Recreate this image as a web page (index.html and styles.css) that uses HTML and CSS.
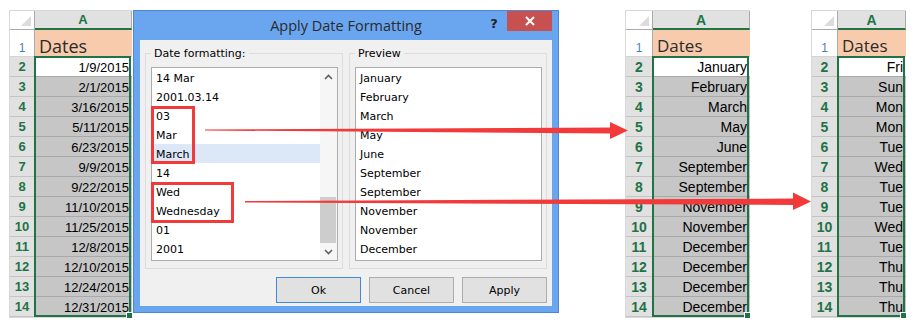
FILE: index.html
```html
<!DOCTYPE html>
<html lang="en">
<head>
    <meta charset="UTF-8">
    <title>Apply Date Formatting</title>
    <link rel="stylesheet" href="styles.css">
</head>
<body>
<div class="scene">

    <!-- source sheet -->
    <div class="sheet sheet-left">
        <div class="corner"></div>
        <div class="colhead">A</div>
        <div class="rowhead first">1</div>
        <div class="cell title">Dates</div>
        <div class="rowheads">
            <div>2</div><div>3</div><div>4</div><div>5</div><div>6</div><div>7</div><div>8</div>
            <div>9</div><div>10</div><div>11</div><div>12</div><div>13</div><div>14</div>
        </div>
        <div class="selection">
            <div class="cell active">1/9/2015</div>
            <div class="cell">2/1/2015</div>
            <div class="cell">3/16/2015</div>
            <div class="cell">5/11/2015</div>
            <div class="cell">6/23/2015</div>
            <div class="cell">9/9/2015</div>
            <div class="cell">9/22/2015</div>
            <div class="cell">11/10/2015</div>
            <div class="cell">11/25/2015</div>
            <div class="cell">12/8/2015</div>
            <div class="cell">12/10/2015</div>
            <div class="cell">12/24/2015</div>
            <div class="cell">12/31/2015</div>
        </div>
    </div>

    <!-- dialog -->
    <div class="dialog">
        <div class="titlebar">
            <span class="title">Apply Date Formatting</span>
            <span class="help">?</span>
            <span class="close">
                <svg width="12" height="10" viewBox="0 0 12 10">
                    <path d="M2 1 L10 9 M10 1 L2 9" stroke="#fff" stroke-width="2" fill="none"/>
                </svg>
            </span>
        </div>
        <div class="dialog-body">
            <div class="groups">
                <div class="group">
                    <span class="group-label">Date formatting:</span>
                    <div class="listbox">
                        <ul class="items">
                            <li>14 Mar</li>
                            <li>2001.03.14</li>
                            <li>03</li>
                            <li>Mar</li>
                            <li class="selected">March</li>
                            <li>14</li>
                            <li>Wed</li>
                            <li>Wednesday</li>
                            <li>01</li>
                            <li>2001</li>
                        </ul>
                        <div class="scrollbar">
                            <div class="sb-btn">
                                <svg width="9" height="6" viewBox="0 0 9 6"><path d="M1 5 L4.5 1.5 L8 5" stroke="#606060" stroke-width="1.6" fill="none"/></svg>
                            </div>
                            <div class="sb-track"><div class="sb-thumb"></div></div>
                            <div class="sb-btn">
                                <svg width="9" height="6" viewBox="0 0 9 6"><path d="M1 1 L4.5 4.5 L8 1" stroke="#606060" stroke-width="1.6" fill="none"/></svg>
                            </div>
                        </div>
                    </div>
                </div>
                <div class="group">
                    <span class="group-label">Preview</span>
                    <div class="listbox">
                        <ul class="items">
                            <li>January</li>
                            <li>February</li>
                            <li>March</li>
                            <li>May</li>
                            <li>June</li>
                            <li>September</li>
                            <li>September</li>
                            <li>November</li>
                            <li>November</li>
                            <li>December</li>
                        </ul>
                    </div>
                </div>
            </div>
            <div class="buttons">
                <button class="ok">Ok</button>
                <button>Cancel</button>
                <button>Apply</button>
            </div>
        </div>
    </div>

    <!-- month result -->
    <div class="sheet sheet-mid">
        <div class="corner"></div>
        <div class="colhead">A</div>
        <div class="rowhead first">1</div>
        <div class="cell title">Dates</div>
        <div class="rowheads">
            <div>2</div><div>3</div><div>4</div><div>5</div><div>6</div><div>7</div><div>8</div>
            <div>9</div><div>10</div><div>11</div><div>12</div><div>13</div><div>14</div>
        </div>
        <div class="selection">
            <div class="cell active">January</div>
            <div class="cell">February</div>
            <div class="cell">March</div>
            <div class="cell">May</div>
            <div class="cell">June</div>
            <div class="cell">September</div>
            <div class="cell">September</div>
            <div class="cell">November</div>
            <div class="cell">November</div>
            <div class="cell">December</div>
            <div class="cell">December</div>
            <div class="cell">December</div>
            <div class="cell">December</div>
        </div>
    </div>

    <!-- weekday result -->
    <div class="sheet sheet-right">
        <div class="corner"></div>
        <div class="colhead">A</div>
        <div class="rowhead first">1</div>
        <div class="cell title">Dates</div>
        <div class="rowheads">
            <div>2</div><div>3</div><div>4</div><div>5</div><div>6</div><div>7</div><div>8</div>
            <div>9</div><div>10</div><div>11</div><div>12</div><div>13</div><div>14</div>
        </div>
        <div class="selection">
            <div class="cell active">Fri</div>
            <div class="cell">Sun</div>
            <div class="cell">Mon</div>
            <div class="cell">Mon</div>
            <div class="cell">Tue</div>
            <div class="cell">Wed</div>
            <div class="cell">Tue</div>
            <div class="cell">Tue</div>
            <div class="cell">Wed</div>
            <div class="cell">Tue</div>
            <div class="cell">Thu</div>
            <div class="cell">Thu</div>
            <div class="cell">Thu</div>
        </div>
    </div>

    <!-- annotations drawn over everything -->
    <svg class="marks" width="918" height="328" viewBox="0 0 918 328">
        <rect x="152.5" y="107.5" width="41" height="55" fill="none" stroke="#f23a3a" stroke-width="3"/>
        <rect x="152.5" y="183.5" width="80" height="38" fill="none" stroke="#f23a3a" stroke-width="3"/>
        <polygon points="205,129.5 612,127.5 612,133.5 205,130.5" fill="#f23a3a"/>
        <polygon points="610,122 628,130.5 610,139" fill="#f23a3a"/>
        <polygon points="245,201 795,198.5 795,205 245,202.5" fill="#f23a3a"/>
        <polygon points="793,192.5 811,201.5 793,210" fill="#f23a3a"/>
    </svg>
</div>
</body>
</html>
```

FILE: styles.css
```css
body {
    margin: 0;
    background: #fff;
}
.scene {
    position: relative;
    width: 918px;
    height: 328px;
    box-sizing: border-box;
    padding: 10px 0 0 9px;
    display: flex;
    align-items: flex-start;
    overflow: hidden;
}

/* ---- spreadsheet ---- */
.sheet {
    display: grid;
    grid-template-rows: 19px 27px auto;
    border: 1px solid #d8d8d8;
    border-right: none;
    font-family: "Liberation Sans", Arial, sans-serif;
    font-size: 13px;
    color: #000;
    background: #fff;
}
.sheet-left {
    grid-template-columns: 25px 97px;
}
.sheet-mid {
    grid-template-columns: 27px 97px;
    margin-left: 66px;
    font-size: 14px;
}
.sheet-right {
    grid-template-columns: 26px 68px;
    margin-left: 61px;
    font-size: 14px;
}
.corner {
    position: relative;
    background: #fff;
    border-right: 1px solid #ababab;
    border-bottom: 1px solid #ababab;
}
.corner::after {
    content: "";
    position: absolute;
    right: 3px;
    bottom: 3px;
    border-style: solid;
    border-width: 0 0 10px 10px;
    border-color: transparent transparent #dcdcdc transparent;
}
.colhead {
    box-sizing: border-box;
    background: #e1e1e1;
    border-bottom: 2px solid #217346;
    border-right: 1px solid #ababab;
    color: #217346;
    font-weight: bold;
    text-align: center;
    line-height: 18px;
}
.rowhead.first {
    background: #fff;
    border-right: 1px solid #ababab;
    border-bottom: 1px solid #d4d4d4;
    color: #4a7fc0;
    font-size: 12px;
    display: flex;
    align-items: flex-end;
    justify-content: center;
    padding-bottom: 1px;
    box-sizing: border-box;
}
.cell.title {
    background: #f8cbad;
    border-bottom: 1px solid #d4d4d4;
    font-size: 18px;
    line-height: 20px;
    display: flex;
    align-items: flex-end;
    padding: 0 0 0 4px;
    box-sizing: border-box;
}
.sheet-mid .cell.title,
.sheet-right .cell.title {
    font-size: 17px;
}
.rowheads > div {
    height: 20px;
    box-sizing: border-box;
    background: #e1e1e1;
    border-bottom: 1px solid #c4c4c4;
    border-right: 1px solid #ababab;
    color: #217346;
    font-weight: bold;
    text-align: center;
    line-height: 20px;
}
.selection {
    position: relative;
}
.selection .cell {
    height: 20px;
    box-sizing: border-box;
    background: #c6c6c6;
    border-bottom: 1px solid #a9a9a9;
    text-align: right;
    padding-right: 3px;
    line-height: 21px;
}
.selection .cell.active {
    background: #fff;
}
.selection::before {
    content: "";
    position: absolute;
    top: -1px;
    left: -1px;
    right: 1px;
    bottom: 0;
    border: 2px solid #217346;
}
.selection::after {
    content: "";
    position: absolute;
    right: -1px;
    bottom: -2px;
    width: 5px;
    height: 5px;
    background: #217346;
    border: 1px solid #fff;
}

/* ---- dialog ---- */
.dialog {
    width: 426px;
    height: 303px;
    margin-left: 1px;
    box-sizing: border-box;
    border: 1px solid #4d86d4;
    background: #6aa5f0;
    padding: 0 6px 6px;
    display: flex;
    flex-direction: column;
}
.titlebar {
    height: 29px;
    display: flex;
    align-items: flex-start;
}
.title {
    flex: 1;
    padding-left: 65px;
    text-align: center;
    font-family: "Open Sans", sans-serif;
    font-size: 14.5px;
    color: #2b2b2b;
    line-height: 29px;
}
.help {
    width: 14px;
    margin-right: 6px;
    font-family: "DejaVu Sans", sans-serif;
    font-weight: bold;
    font-size: 13px;
    color: #222;
    line-height: 25px;
    text-align: center;
}
.close {
    width: 45px;
    height: 20px;
    background: #c75050;
    display: flex;
    align-items: center;
    justify-content: center;
}
.dialog-body {
    flex: 1;
    background: #f0f0f0;
    padding: 0 5px;
    font-family: "DejaVu Sans", sans-serif;
    font-size: 11px;
    line-height: 14px;
    color: #000;
}
.groups {
    display: flex;
    gap: 6px;
    margin-top: 13px;
}
.group {
    width: 198px;
    height: 216px;
    box-sizing: border-box;
    border: 1px solid #dcdcdc;
    padding-left: 5px;
}
.group-label {
    display: block;
    width: max-content;
    margin-top: -7px;
    padding: 0 3px;
    background: #f0f0f0;
    line-height: 14px;
}
.listbox {
    width: 187px;
    height: 194px;
    box-sizing: border-box;
    margin-top: 6px;
    border: 1px solid #acacac;
    background: #fff;
    display: flex;
}
.items {
    flex: 1;
    list-style: none;
    margin: 0;
    padding: 0;
}
.items li {
    height: 19px;
    line-height: 21px;
    padding-left: 4px;
}
.items li.selected {
    background: #dce7f8;
}
.scrollbar {
    width: 17px;
    display: flex;
    flex-direction: column;
    background: #f6f6f6;
}
.sb-btn {
    height: 17px;
    display: flex;
    align-items: center;
    justify-content: center;
}
.sb-track {
    flex: 1;
    display: flex;
    flex-direction: column;
    justify-content: flex-end;
}
.sb-thumb {
    height: 46px;
    margin: 0 1px 0 0;
    background: #cdcdcd;
}
.buttons {
    display: flex;
    justify-content: flex-end;
    gap: 8px;
    margin-top: 8px;
}
button {
    width: 85px;
    height: 26px;
    box-sizing: border-box;
    border: 1px solid #adadad;
    background: #e1e1e1;
    font-family: "DejaVu Sans", sans-serif;
    font-size: 11px;
    color: #000;
    padding: 0;
}
button.ok {
    border-color: #3c8ad8;
}

/* ---- red annotations ---- */
.marks {
    position: absolute;
    top: 0;
    left: 0;
    pointer-events: none;
}
```
